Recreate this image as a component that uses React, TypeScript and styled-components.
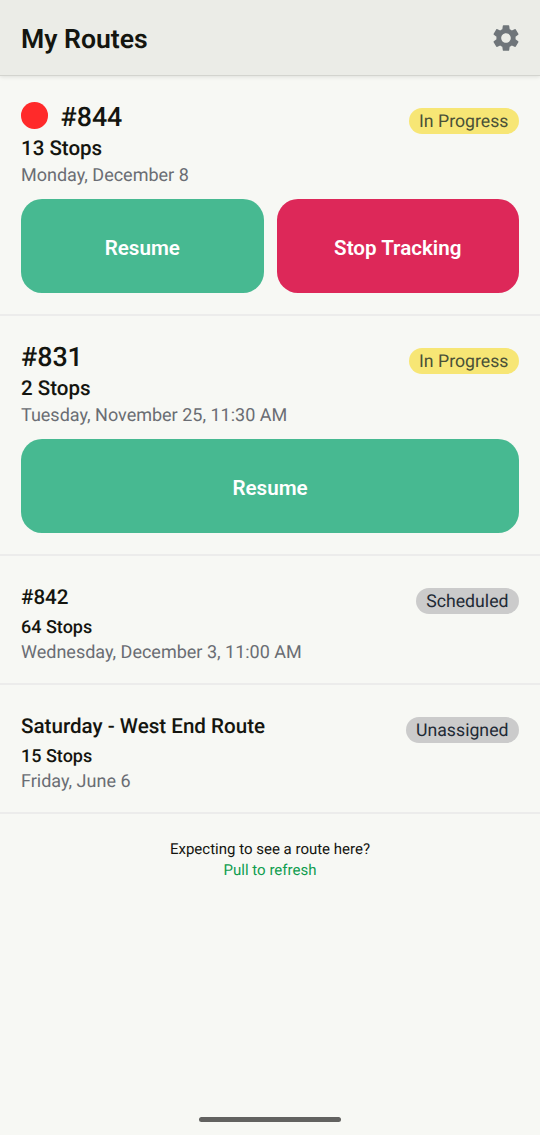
import React from 'react';
import styled, { createGlobalStyle } from 'styled-components';
import { MdSettings } from 'react-icons/md';

const Global = createGlobalStyle`
  * { box-sizing: border-box; }
  body { margin: 0; background: #f7f8f4; font-family: Roboto, sans-serif; color: #14150f; text-rendering: geometricPrecision; }
`;
const Screen = styled.div`
  display: flex; flex-direction: column; height: 1135px; width: 540px; background: #f7f8f4;
`;
const Header = styled.header`
  height: 76px; flex: none; display: flex; align-items: center; justify-content: space-between;
  padding: 0 18px 0 21px; background: #ebece7; border-bottom: 1px solid #d3d4cf;
  box-shadow: 0 1px 4px rgba(0,0,0,.1);
`;
const Title = styled.h1`
  margin: 4px 0 0; font-size: 26.6px; line-height: 32px; font-weight: 600;
`;
const Gear = styled(MdSettings)`
  width: 32px; height: 32px; color: #6f757a; display: block;
`;
const Route = styled.section<{ $height: number }>`
  height: ${p => p.$height}px; flex: none; padding: 25px 21px 0; border-bottom: 2px solid #ececeb;
`;
const Top = styled.div`display: flex; justify-content: space-between; align-items: flex-start;`;
const Name = styled.h2<{ $large?: boolean }>`
  margin: 0; display: flex; align-items: center; gap: 13px; font-weight: 500;
  font-size: ${p => (p.$large ? 26.8 : 20.6)}px; line-height: ${p => (p.$large ? 32 : 34)}px;
`;
const Dot = styled.span`
  width: 26.5px; height: 26.5px; margin-bottom: 3.5px; border-radius: 50%; background: #ff2a2a;
`;
const Stops = styled.div<{ $large?: boolean }>`
  margin-top: ${p => (p.$large ? 2 : -1)}px; font-weight: 500;
  font-size: ${p => (p.$large ? 20.5 : 18)}px; line-height: 28px;
`;
const When = styled.div<{ $large?: boolean }>`
  margin-top: ${p => (p.$large ? 1 : -1)}px; font-size: 18px; line-height: 24px; color: #6a6d73;
`;
const Badge = styled.span<{ $active?: boolean }>`
  margin: 6.5px 0 -1px; height: 26.5px; line-height: 29px; padding: 0 10.5px; border-radius: 14px;
  font-size: 17.7px; color: ${p => (p.$active ? '#4a5138' : '#1f2a35')};
  background: ${p => (p.$active ? '#f7e675' : '#cbcbcb')};
`;
const Actions = styled.div`display: flex; gap: 13px; margin-top: 11px;`;
const Button = styled.button<{ $stop?: boolean }>`
  flex: 1; height: 94px; border: 0; border-radius: 21px; padding: 4px 0 0; color: #fff;
  font: 600 20.6px Roboto, sans-serif; background: ${p => (p.$stop ? '#dd2859' : '#47b991')};
`;
const Hint = styled.footer`
  padding-top: 25px; text-align: center; font-size: 15px; line-height: 21px; flex: 1;
`;
const Refresh = styled.div`color: #0f9d4f;`;
const HomeBar = styled.div`
  width: 142px; height: 5px; border-radius: 3px; background: #626260; margin: 0 auto 13px;
`;

type Item = { name: string; stops: number; when: string; status: string; height: number; active?: boolean; tracking?: boolean };
const routes: Item[] = [
  { name: '#844', stops: 13, when: 'Monday, December 8', status: 'In Progress', height: 240, active: true, tracking: true },
  { name: '#831', stops: 2, when: 'Tuesday, November 25, 11:30 AM', status: 'In Progress', height: 240, active: true },
  { name: '#842', stops: 64, when: 'Wednesday, December 3, 11:00 AM', status: 'Scheduled', height: 129 },
  { name: 'Saturday - West End Route', stops: 15, when: 'Friday, June 6', status: 'Unassigned', height: 129 },
];

export default function App() {
  return (
    <Screen>
      <Global />
      <Header><Title>My Routes</Title><Gear /></Header>
      {routes.map(r => (
        <Route key={r.name} $height={r.height}>
          <Top>
            <Name $large={r.active}>{r.tracking && <Dot />}{r.name}</Name>
            <Badge $active={r.active}>{r.status}</Badge>
          </Top>
          <Stops $large={r.active}>{r.stops} Stops</Stops>
          <When $large={r.active}>{r.when}</When>
          {r.active && (
            <Actions>
              <Button>Resume</Button>
              {r.tracking && <Button $stop>Stop Tracking</Button>}
            </Actions>
          )}
        </Route>
      ))}
      <Hint>Expecting to see a route here?<Refresh>Pull to refresh</Refresh></Hint>
      <HomeBar />
    </Screen>
  );
}
